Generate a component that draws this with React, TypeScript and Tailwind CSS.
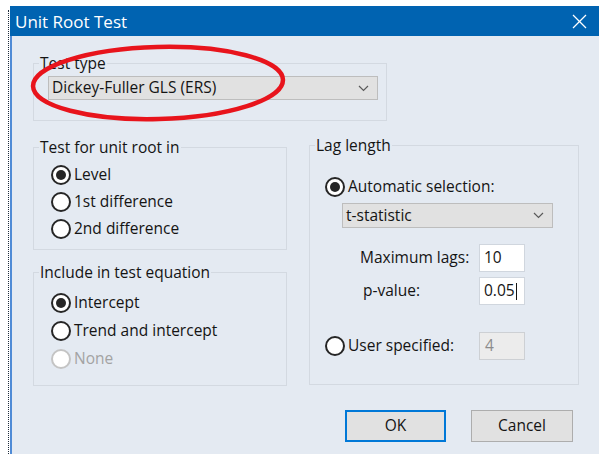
import React from 'react';

interface RadioProps {
  label: string;
  checked?: boolean;
  disabled?: boolean;
}

const Radio: React.FC<RadioProps> = ({ label, checked, disabled }) => (
  <div className="flex items-center gap-[3px]">
    <span
      className={`flex h-[20px] w-[20px] shrink-0 items-center justify-center rounded-full border-2 bg-white ${
        disabled ? 'border-[#c4c4c4]' : 'border-[#262626]'
      }`}
    >
      {checked && <span className="h-[10px] w-[10px] rounded-full bg-[#262626]" />}
    </span>
    <span className={disabled ? 'text-[#a3a3a3]' : ''}>{label}</span>
  </div>
);

const Chevron = () => (
  <svg width="11" height="7" viewBox="0 0 11 7" fill="none">
    <polyline points="1,1 5.5,5.5 10,1" stroke="#5a5a5a" strokeWidth="1.2" />
  </svg>
);

interface ComboProps {
  value: string;
  className: string;
}

const Combo: React.FC<ComboProps> = ({ value, className }) => (
  <div
    className={`flex items-center justify-between border border-[#bdbdbd] bg-[#e1e1e1] pl-[3px] pr-[8px] ${className}`}
  >
    <span>{value}</span>
    <Chevron />
  </div>
);

interface GroupProps {
  title: string;
  className: string;
  children: React.ReactNode;
}

const GroupBox: React.FC<GroupProps> = ({ title, className, children }) => (
  <div className={`border border-[#d3d9e1] ${className}`}>
    <div className="-mt-[10px] ml-[5px] w-fit bg-[#e4eaf2] px-[1px] leading-[18px]">{title}</div>
    {children}
  </div>
);

const App: React.FC = () => {
  return (
    <div className="relative flex h-[454px] w-[599px] flex-col overflow-hidden bg-white pt-[6px] font-['Open_Sans',sans-serif] text-[15.5px] text-[#141414]">
      <div className="flex flex-1">
        {/* dotted edge of the window behind */}
        <div className="w-[10px] shrink-0 pt-[4px]">
          <div className="ml-[8px] h-full w-0 border-l border-dotted border-[#1e2b3a]" />
        </div>

        <div className="flex flex-1 flex-col">
          <div className="flex h-[30px] items-center justify-between bg-[#0063b1] pl-[5px] pr-[12px]">
            <span className="text-[17px] leading-none text-white">Unit Root Test</span>
            <svg width="15" height="15" viewBox="0 0 15 15">
              <line x1="1" y1="1" x2="14" y2="14" stroke="white" strokeWidth="1.3" />
              <line x1="14" y1="1" x2="1" y2="14" stroke="white" strokeWidth="1.3" />
            </svg>
          </div>

          <div className="flex-1 border-l-2 border-[#4f8bd6] bg-[#e4eaf2] pl-[21px] pt-[27px]">
            <GroupBox title="Test type" className="h-[58px] w-[354px]">
              <Combo value="Dickey-Fuller GLS (ERS)" className="ml-[14px] mt-[4px] h-[24px] w-[330px]" />
            </GroupBox>

            <div className="mt-[24px] flex items-start gap-[22px]">
              <div className="flex flex-col">
                <GroupBox title="Test for unit root in" className="mt-[2px] h-[103px] w-[254px]">
                  <div className="mt-[5px] pl-[17px]">
                    <div className="flex h-[27px] items-center">
                      <Radio label="Level" checked />
                    </div>
                    <div className="flex h-[27px] items-center">
                      <Radio label="1st difference" />
                    </div>
                    <div className="flex h-[27px] items-center">
                      <Radio label="2nd difference" />
                    </div>
                  </div>
                </GroupBox>

                <GroupBox title="Include in test equation" className="mt-[22px] h-[114px] w-[254px]">
                  <div className="mt-[8px] pl-[17px]">
                    <div className="flex h-[28px] items-center">
                      <Radio label="Intercept" checked />
                    </div>
                    <div className="flex h-[28px] items-center">
                      <Radio label="Trend and intercept" />
                    </div>
                    <div className="flex h-[28px] items-center">
                      <Radio label="None" disabled />
                    </div>
                  </div>
                </GroupBox>
              </div>

              <GroupBox title="Lag length" className="h-[240px] w-[270px]">
                <div className="mt-[20px] flex h-[26px] items-center pl-[15px]">
                  <Radio label="Automatic selection:" checked />
                </div>
                <Combo value="t-statistic" className="ml-[32px] mt-[3px] h-[25px] w-[211px]" />

                <div className="ml-[50px] mt-[16px] flex h-[28px] items-center">
                  <span className="w-[119px]">Maximum lags:</span>
                  <div className="flex h-[28px] w-[46px] items-center border border-[#d0d6de] bg-white pl-[4px]">10</div>
                </div>
                <div className="ml-[50px] mt-[5px] flex h-[28px] items-center">
                  <span className="w-[119px] pl-[3px]">p-value:</span>
                  <div className="flex h-[28px] w-[46px] items-center border border-[#d0d6de] bg-white pl-[4px]">
                    0.05
                    <span className="ml-[1px] h-[17px] w-[1px] bg-[#141414]" />
                  </div>
                </div>

                <div className="mt-[27px] flex h-[28px] items-center pl-[15px]">
                  <div className="w-[154px]">
                    <Radio label="User specified:" />
                  </div>
                  <div className="flex h-[28px] w-[46px] items-center border border-[#cdd0d4] bg-[#ececec] pl-[5px] text-[#8c8c8c]">
                    4
                  </div>
                </div>
              </GroupBox>
            </div>

            <div className="ml-[312px] mt-[24px] flex gap-[25px]">
              <button className="h-[32px] w-[101px] border-2 border-[#0078d7] bg-[#e1e1e1]">OK</button>
              <button className="h-[32px] w-[102px] border border-[#adadad] bg-[#e1e1e1]">Cancel</button>
            </div>
          </div>
        </div>
      </div>

      {/* red marker ring around the test type selection */}
      <svg className="pointer-events-none absolute left-0 top-0" width="599" height="454">
        <ellipse
          cx="158"
          cy="83"
          rx="125"
          ry="36"
          fill="none"
          stroke="#e8141c"
          strokeWidth="4.5"
          transform="rotate(-1.5 158 83)"
        />
      </svg>
    </div>
  );
};

export default App;
